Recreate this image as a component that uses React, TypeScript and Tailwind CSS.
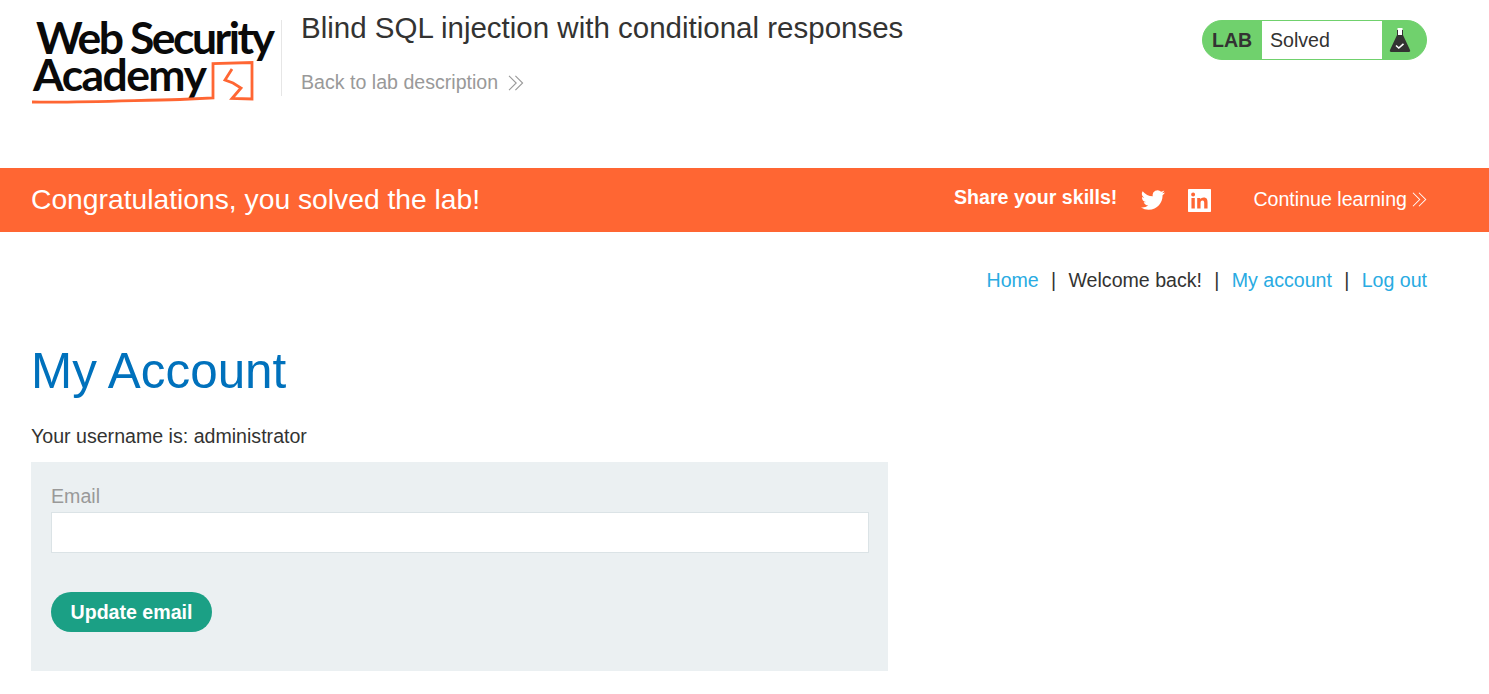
const Chevrons = ({ className }: { className: string }) => (
  <svg viewBox="0 0 16 16" className={className} fill="none" stroke="currentColor" strokeWidth="1.1">
    <path d="M1 .8 8.2 8 1 15.2" />
    <path d="M7.400 .8 14.600 8 7.400 15.200" />
  </svg>
)

const Logo = () => (
  <svg viewBox="0 -10 250 100" className="h-[100px] w-[250px]">
    <g fontFamily="Lato, sans-serif" fontWeight="700" fontSize="44.5" fill="#0a0a0a">
      <text x="5" y="38" letterSpacing="-2.5">Web Security</text>
      <text x="2" y="75" letterSpacing="-1.6">Academy</text>
    </g>
    <path
      d="M1 86c40 1 85-1 148-2.500l33-1.500V47.500l39-1V83l-20-.5 9-10.500-8-5-8-3 7-11"
      fill="none"
      stroke="#ff6633"
      strokeWidth="2.800"
    />
  </svg>
)

const Flask = () => (
  <svg viewBox="0 0 22 26" className="h-[26px] w-[22px]">
    <path d="M8.500 1h5v8h-5z" fill="#fff" />
    <path d="M8 3h1v6H8zM13 3h1v6h-1z" fill="#333332" />
    <path d="M8 8h6L21 23c.5 1.200 0 2-1.200 2H2.200C1 25 .5 24.200 1 23z" fill="#333332" />
    <path d="M7 18.500l2.800 2.500 4.700-4.200" fill="none" stroke="#fff" strokeWidth="1.600" />
  </svg>
)

const Twitter = () => (
  <svg viewBox="0 0 24 24" className="h-[24px] w-[24px]" fill="#fff">
    <path d="M23.950 4.570a10 10 0 0 1-2.820.775 4.960 4.960 0 0 0 2.160-2.724 9.900 9.900 0 0 1-3.120 1.180 4.920 4.920 0 0 0-8.380 4.480A13.970 13.970 0 0 1 1.670 3.150a4.920 4.920 0 0 0 1.520 6.570 4.900 4.900 0 0 1-2.230-.616v.060a4.920 4.920 0 0 0 3.950 4.830 5 5 0 0 1-2.210.085 4.940 4.940 0 0 0 4.600 3.420A9.870 9.870 0 0 1 0 19.540a14 14 0 0 0 7.560 2.210c9.050 0 14-7.500 14-13.980 0-.21 0-.42-.015-.63a9.940 9.940 0 0 0 2.460-2.550z" />
  </svg>
)

const LinkedIn = () => (
  <svg viewBox="1 1 22 22" className="h-[23px] w-[23px]" fill="#fff">
    <path d="M22.200 1H1.800C1.400 1 1 1.400 1 1.800v20.400c0 .4.400.8.800.8h20.400c.4 0 .8-.4.800-.8V1.800c0-.4-.4-.8-.8-.8zM7.500 19.700H4.300V9.500h3.200zM5.900 8.100a1.900 1.900 0 1 1 0-3.800 1.900 1.900 0 0 1 0 3.800zm13.800 11.600h-3.200v-5c0-1.200 0-2.700-1.600-2.700s-1.900 1.300-1.900 2.600v5.100H9.800V9.500h3v1.400c.5-.8 1.500-1.700 3.200-1.700 3.200 0 3.700 2.100 3.700 4.900z" />
  </svg>
)

export default function App() {
  return (
    <div className="min-h-[694px] bg-white font-['Liberation_Sans',Arial,sans-serif] text-[19.6px] text-[#333332]">
      <header className="flex h-[168px] pl-[31px] pr-[62px]">
        <div className="flex h-[76px] mt-[20px] w-[251px] items-end border-r border-[#e6e6e6]">
          <div className="mb-[-10px]">
            <Logo />
          </div>
        </div>
        <div className="ml-[19px] flex-1">
          <h2 className="mt-[9px] text-[29.5px] leading-[38px]">Blind SQL injection with conditional responses</h2>
          <a className="mt-[21px] flex items-center gap-[10px] text-[#999999]">
            Back to lab description
            <Chevrons className="h-[16px] w-[16px]" />
          </a>
        </div>
        <div className="mt-[20px] flex h-[40px] w-[225px] overflow-hidden rounded-[20px] border border-[#70d16d] bg-[#70d16d]">
          <span className="w-[59px] pl-[9px] leading-[38px] font-bold">LAB</span>
          <span className="w-[120px] bg-white pl-[8px] leading-[38px]">Solved</span>
          <span className="flex flex-1 pl-[7px] pt-[6px]">
            <Flask />
          </span>
        </div>
      </header>

      <div className="flex h-[64px] items-center bg-[#ff6633] pl-[31px] pr-[62px] text-white">
        <h4 className="mb-[1px] flex-1 text-[28.25px]">Congratulations, you solved the lab!</h4>
        <strong className="mb-[4px] mr-[24px]">Share your skills!</strong>
        <span className="mr-[23px]"><Twitter /></span>
        <span className="mr-[42px]"><LinkedIn /></span>
        <a className="flex items-center gap-[5px]">
          Continue learning
          <Chevrons className="h-[15px] w-[15px]" />
        </a>
      </div>

      <nav className="flex justify-end gap-[12.3px] pl-[31px] pr-[62px] pt-[36px] leading-[25px]">
        <a className="text-[#29abe2]">Home</a>
        <span>|</span>
        <span>Welcome back!</span>
        <span>|</span>
        <a className="text-[#29abe2]">My account</a>
        <span>|</span>
        <a className="text-[#29abe2]">Log out</a>
      </nav>

      <main className="pl-[31px] pr-[62px]">
        <h1 className="mt-[46px] text-[49.4px] leading-[64px] text-[#0071bc]">My Account</h1>
        <p className="mt-[20px] leading-[26px]">Your username is: administrator</p>
        <form className="mt-[13px] h-[209px] w-[857px] bg-[#ebf0f2] px-[20px] pt-[22px]">
          <label className="block leading-[25px] text-[#999999]">Email</label>
          <input className="mt-[3px] block h-[41px] w-[818px] border border-[#dbe3e6] bg-white" />
          <button type="button" className="mt-[39px] h-[40px] w-[161px] rounded-[20px] bg-[#1ba085] pt-[1px] font-bold text-white">
            Update email
          </button>
        </form>
      </main>
    </div>
  )
}
